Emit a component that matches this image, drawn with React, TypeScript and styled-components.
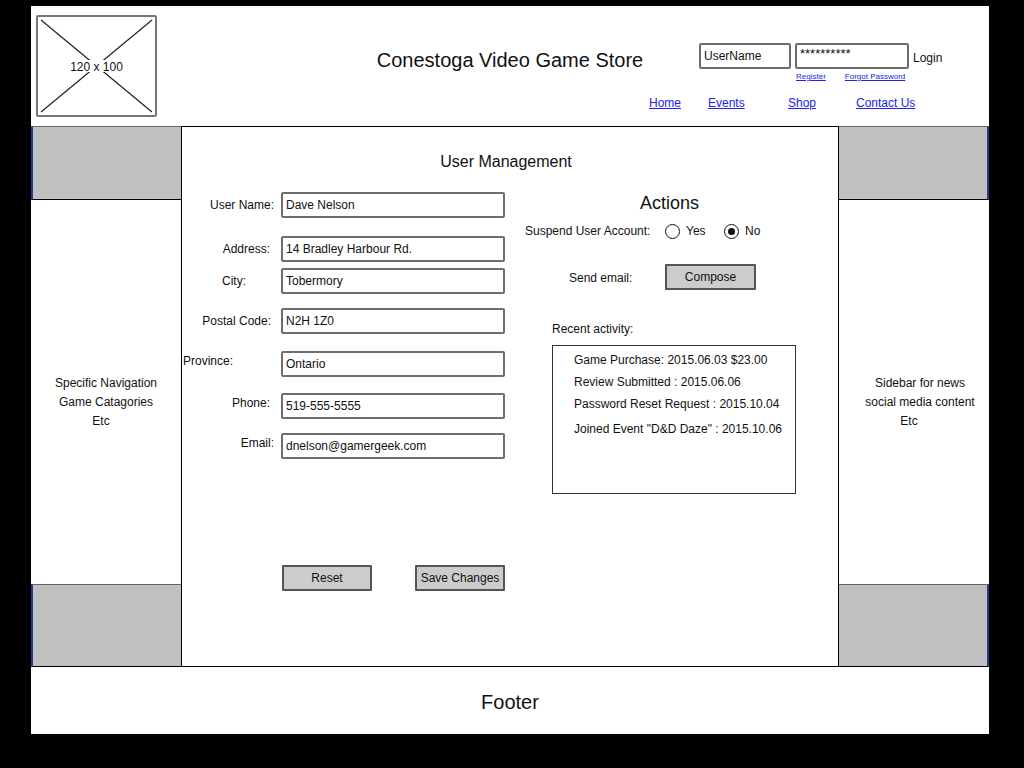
import styled, { createGlobalStyle } from "styled-components";

const GlobalStyle = createGlobalStyle`
  html, body {
    margin: 0;
    padding: 0;
    background: #000;
  }
  body {
    font-family: "Liberation Sans", Arial, sans-serif;
    color: #111;
    font-size: 12px;
  }
`;

const Page = styled.div`
  width: 958px;
  height: 728px;
  margin: 6px 0 0 31px;
  background: #fff;
  display: flex;
  flex-direction: column;
`;

const Header = styled.header`
  height: 120px;
  display: grid;
  grid-template-columns: 1fr 1fr;
  align-items: start;
`;

const Placeholder = styled.div`
  grid-column: 1;
  grid-row: 1;
  margin: 9px 0 0 5px;
  width: 121px;
  height: 102px;
  box-sizing: border-box;
  border: 2px solid #777;
  border-radius: 2px;

  svg {
    display: block;
  }
`;

const SiteTitle = styled.h1`
  grid-column: 1 / -1;
  grid-row: 1;
  justify-self: center;
  margin: 42px 0 0;
  font-size: 20px;
  font-weight: normal;
  line-height: 24px;
`;

const LoginArea = styled.div`
  grid-column: 2;
  grid-row: 1;
  justify-self: start;
  margin: 37px 0 0 139px;
  display: flex;
  flex-direction: column;
`;

const LoginRow = styled.div`
  display: flex;
  gap: 4px;
  padding-left: 50px;
`;

const TextBox = styled.div<{ w: number }>`
  width: ${(p) => p.w}px;
  height: 26px;
  box-sizing: border-box;
  border: 2px solid #6e6e6e;
  border-radius: 2px;
  padding-left: 3px;
  font-size: 12px;
  line-height: 22px;
  background: #fff;
  white-space: nowrap;
`;

const Stars = styled(TextBox)`
  font-size: 13px;
  line-height: 18px;
`;

const LoginText = styled.span`
  font-size: 12px;
  margin-top: 8px;
`;

const SmallLinks = styled.div`
  display: flex;
  gap: 19px;
  padding-left: 147px;
  margin-top: 3px;
  line-height: 10px;
`;

const SmallLink = styled.a`
  font-size: 8px;
  color: #2222ee;
  text-decoration: underline;
`;

const Nav = styled.nav`
  display: flex;
  margin-top: 13px;
`;

const NavLink = styled.a<{ w?: number }>`
  ${(p) => (p.w ? `width: ${p.w}px;` : "")}
  font-size: 12px;
  line-height: 16px;
  color: #2222ee;
  text-decoration: underline;
`;

const Body = styled.div`
  display: flex;
  height: 541px;
`;

const Sidebar = styled.aside`
  width: 150px;
  display: flex;
  flex-direction: column;
`;

const GrayBlock = styled.div<{ h: number; side: "left" | "right" }>`
  height: ${(p) => p.h}px;
  box-sizing: border-box;
  background: #c0c0c0;
  border-top: 1px solid #666;
  border-bottom: 1px solid #000;
  border-${(p) => p.side}: 2px solid #233b8c;
`;

const SideText = styled.div<{ offset: number }>`
  flex: 1;
  display: flex;
  flex-direction: column;
  align-items: center;
  justify-content: center;
  padding: 20px 0 0 ${(p) => p.offset}px;
  font-size: 12px;
  line-height: 19px;
`;

const SideLine = styled.span<{ shift?: number }>`
  margin-left: ${(p) => p.shift || 0}px;
`;

const Main = styled.main`
  width: 658px;
  box-sizing: border-box;
  border: 1px solid #000;
  padding-top: 23px;
  display: flex;
  flex-direction: column;
`;

const MainTitle = styled.h2`
  margin: 0;
  padding-right: 8px;
  text-align: center;
  font-size: 16px;
  font-weight: normal;
  line-height: 24px;
`;

const Columns = styled.div`
  display: flex;
`;

const FormCol = styled.div`
  width: 328px;
  display: flex;
  flex-direction: column;
`;

const FieldRow = styled.div<{ mt: number }>`
  display: flex;
  align-items: center;
  margin-top: ${(p) => p.mt}px;
`;

const FieldLabel = styled.label<{ pr?: number; left?: boolean; lift?: number }>`
  width: 99px;
  box-sizing: border-box;
  text-align: ${(p) => (p.left ? "left" : "right")};
  padding: 0 ${(p) => p.pr || 0}px ${(p) => p.lift || 0}px ${(p) => (p.left ? 1 : 0)}px;
  font-size: 12px;
  white-space: nowrap;
`;

const ButtonRow = styled.div`
  display: flex;
  gap: 43px;
  padding-left: 100px;
  margin-top: 106px;
`;

const Button = styled.button<{ w: number }>`
  width: ${(p) => p.w}px;
  height: 26px;
  box-sizing: border-box;
  background: #cccccc;
  border: 2px solid #555;
  border-radius: 1px;
  font-family: inherit;
  font-size: 12px;
  color: #111;
  padding: 0;
`;

const ActionsCol = styled.div`
  flex: 1;
  padding-left: 15px;
  display: flex;
  flex-direction: column;
`;

const ActionsTitle = styled.h3`
  margin: 17px 0 0;
  padding-right: 24px;
  text-align: center;
  font-size: 18px;
  font-weight: normal;
  line-height: 24px;
`;

const SuspendRow = styled.div`
  display: flex;
  align-items: center;
  height: 20px;
  margin-top: 6px;
`;

const SuspendLabel = styled.span`
  width: 140px;
  white-space: nowrap;
`;

const RadioOption = styled.span<{ w?: number }>`
  ${(p) => (p.w ? `width: ${p.w}px;` : "")}
  display: flex;
  align-items: center;
  gap: 6px;
`;

const RadioCircle = styled.span<{ checked?: boolean }>`
  width: 15px;
  height: 15px;
  box-sizing: border-box;
  border: 1.5px solid #111;
  border-radius: 50%;
  display: flex;
  align-items: center;
  justify-content: center;

  &::after {
    content: "";
    width: 7px;
    height: 7px;
    border-radius: 50%;
    background: ${(p) => (p.checked ? "#111" : "transparent")};
  }
`;

const SendRow = styled.div`
  display: flex;
  align-items: center;
  margin-top: 23px;
  padding-left: 44px;
`;

const SendLabel = styled.span`
  width: 96px;
  padding-top: 2px;
`;

const RecentLabel = styled.div`
  margin-top: 31px;
  padding-left: 27px;
  line-height: 16px;
`;

const RecentBox = styled.div`
  margin: 8px 0 0 27px;
  width: 244px;
  height: 149px;
  box-sizing: border-box;
  border: 1.5px solid #333;
  padding: 6px 0 0 21px;
`;

const Activity = styled.div<{ mt: number }>`
  margin-top: ${(p) => p.mt}px;
  line-height: 16px;
  white-space: nowrap;
`;

const Footer = styled.footer`
  flex: 1;
  display: flex;
  align-items: center;
  justify-content: center;
  padding-top: 4px;
  font-size: 20px;
`;

const fields = [
  { label: "User Name:", value: "Dave Nelson", mt: 18, pr: 7 },
  { label: "Address:", value: "14 Bradley Harbour Rd.", mt: 18, pr: 11 },
  { label: "City:", value: "Tobermory", mt: 6, pr: 35 },
  { label: "Postal Code:", value: "N2H 1Z0", mt: 14, pr: 10 },
  { label: "Province:", value: "Ontario", mt: 17, left: true, lift: 6 },
  { label: "Phone:", value: "519-555-5555", mt: 16, pr: 11, lift: 6 },
  { label: "Email:", value: "dnelson@gamergeek.com", mt: 14, pr: 7, lift: 6 },
];

const activity = [
  { text: "Game Purchase: 2015.06.03 $23.00", mt: 0 },
  { text: "Review Submitted : 2015.06.06", mt: 6 },
  { text: "Password Reset Request : 2015.10.04", mt: 6 },
  { text: "Joined Event \"D&D Daze\" : 2015.10.06", mt: 9 },
];

function App() {
  return (
    <>
      <GlobalStyle />
      <Page>
        <Header>
          <Placeholder>
            <svg width="117" height="98" viewBox="0 0 117 98">
              <line x1="3" y1="3" x2="114" y2="95" stroke="#222" strokeWidth="1.2" />
              <line x1="114" y1="3" x2="3" y2="95" stroke="#222" strokeWidth="1.2" />
              <rect x="31" y="43" width="55" height="12" fill="#fff" />
              <text x="58.5" y="53.5" textAnchor="middle" fontSize="12" fontFamily="Liberation Sans, Arial, sans-serif" fill="#111">
                120 x 100
              </text>
            </svg>
          </Placeholder>
          <SiteTitle>Conestoga Video Game Store</SiteTitle>
          <LoginArea>
            <LoginRow>
              <TextBox w={92}>UserName</TextBox>
              <Stars w={114}>**********</Stars>
              <LoginText>Login</LoginText>
            </LoginRow>
            <SmallLinks>
              <SmallLink>Register</SmallLink>
              <SmallLink>Forgot Password</SmallLink>
            </SmallLinks>
            <Nav>
              <NavLink w={59}>Home</NavLink>
              <NavLink w={80}>Events</NavLink>
              <NavLink w={68}>Shop</NavLink>
              <NavLink>Contact Us</NavLink>
            </Nav>
          </LoginArea>
        </Header>

        <Body>
          <Sidebar>
            <GrayBlock h={74} side="left" />
            <SideText offset={0}>
              <SideLine>Specific Navigation</SideLine>
              <SideLine>Game Catagories</SideLine>
              <SideLine shift={-10}>Etc</SideLine>
            </SideText>
            <GrayBlock h={83} side="left" />
          </Sidebar>

          <Main>
            <MainTitle>User Management</MainTitle>
            <Columns>
              <FormCol>
                {fields.map((f) => (
                  <FieldRow key={f.label} mt={f.mt}>
                    <FieldLabel pr={f.pr} left={f.left} lift={f.lift}>
                      {f.label}
                    </FieldLabel>
                    <TextBox w={224}>{f.value}</TextBox>
                  </FieldRow>
                ))}
                <ButtonRow>
                  <Button w={90}>Reset</Button>
                  <Button w={90}>Save Changes</Button>
                </ButtonRow>
              </FormCol>

              <ActionsCol>
                <ActionsTitle>Actions</ActionsTitle>
                <SuspendRow>
                  <SuspendLabel>Suspend User Account:</SuspendLabel>
                  <RadioOption w={59}>
                    <RadioCircle />
                    Yes
                  </RadioOption>
                  <RadioOption>
                    <RadioCircle checked />
                    No
                  </RadioOption>
                </SuspendRow>
                <SendRow>
                  <SendLabel>Send email:</SendLabel>
                  <Button w={91}>Compose</Button>
                </SendRow>
                <RecentLabel>Recent activity:</RecentLabel>
                <RecentBox>
                  {activity.map((a) => (
                    <Activity key={a.text} mt={a.mt}>
                      {a.text}
                    </Activity>
                  ))}
                </RecentBox>
              </ActionsCol>
            </Columns>
          </Main>

          <Sidebar>
            <GrayBlock h={74} side="right" />
            <SideText offset={12}>
              <SideLine>Sidebar for news</SideLine>
              <SideLine>social media content</SideLine>
              <SideLine shift={-22}>Etc</SideLine>
            </SideText>
            <GrayBlock h={83} side="right" />
          </Sidebar>
        </Body>

        <Footer>Footer</Footer>
      </Page>
    </>
  );
}

export default App;
